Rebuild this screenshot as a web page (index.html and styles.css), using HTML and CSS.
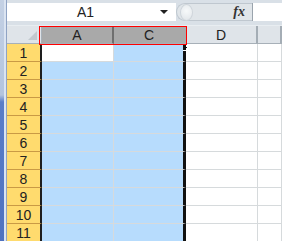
FILE: index.html
```html
<!DOCTYPE html>
<html lang="en">
<head>
  <meta charset="UTF-8">
  <title>Sheet selection</title>
  <link rel="stylesheet" href="styles.css">
</head>
<body>
<div class="app">
  <div class="strip"></div>

  <div class="main">
    <div class="fbar">
      <div class="namebox">
        <span class="ref">A1</span>
        <span class="caret"></span>
      </div>
      <div class="fxzone">
        <span class="knob"></span>
        <span class="fx">fx</span>
      </div>
      <div class="input"></div>
    </div>

    <div class="sheet">
      <div class="row head">
        <div class="corner"><span class="tri"></span></div>
        <div class="ch sel sep">A</div>
        <div class="ch sel">C</div>
        <div class="ch">D</div>
        <div class="ch rest"></div>
      </div>
      <div class="row"><div class="rh">1</div><div class="cell active"></div><div class="cell pick last"></div><div class="cell"></div><div class="cell rest"></div></div>
      <div class="row"><div class="rh">2</div><div class="cell pick"></div><div class="cell pick last"></div><div class="cell"></div><div class="cell rest"></div></div>
      <div class="row"><div class="rh">3</div><div class="cell pick"></div><div class="cell pick last"></div><div class="cell"></div><div class="cell rest"></div></div>
      <div class="row"><div class="rh">4</div><div class="cell pick"></div><div class="cell pick last"></div><div class="cell"></div><div class="cell rest"></div></div>
      <div class="row"><div class="rh">5</div><div class="cell pick"></div><div class="cell pick last"></div><div class="cell"></div><div class="cell rest"></div></div>
      <div class="row"><div class="rh">6</div><div class="cell pick"></div><div class="cell pick last"></div><div class="cell"></div><div class="cell rest"></div></div>
      <div class="row"><div class="rh">7</div><div class="cell pick"></div><div class="cell pick last"></div><div class="cell"></div><div class="cell rest"></div></div>
      <div class="row"><div class="rh">8</div><div class="cell pick"></div><div class="cell pick last"></div><div class="cell"></div><div class="cell rest"></div></div>
      <div class="row"><div class="rh">9</div><div class="cell pick"></div><div class="cell pick last"></div><div class="cell"></div><div class="cell rest"></div></div>
      <div class="row"><div class="rh">10</div><div class="cell pick"></div><div class="cell pick last"></div><div class="cell"></div><div class="cell rest"></div></div>
      <div class="row"><div class="rh">11</div><div class="cell pick"></div><div class="cell pick last"></div><div class="cell"></div><div class="cell rest"></div></div>

      <!-- red outline round the selected column headers -->
      <div class="head-mark"></div>
      <div class="handle"></div>
    </div>
  </div>
</div>
</body>
</html>
```

FILE: styles.css
```css
html, body {
  margin: 0;
  padding: 0;
}

body {
  width: 282px;
  height: 241px;
  overflow: hidden;
  background-color: #fff;
  font-family: "Liberation Sans", Arial, sans-serif;
  color: #222;
}

.app {
  display: flex;
  height: 241px;
}

.strip {
  width: 7px;
  flex: none;
  background: linear-gradient(to bottom, #c4d1e4 0, #b3c4de 95px, #5a7dc8 102px, #4f72c0 100%);
  border-right: 1px solid #8fa3c4;
  box-sizing: border-box;
  box-shadow: inset -2px 0 0 #dbe4f1;
}

.main {
  flex: 1;
  min-width: 0;
}

/* formula bar */

.fbar {
  display: flex;
  height: 26px;
  padding: 3px 0 4px;
  box-sizing: border-box;
  background-color: #d9e0e7;
  border-bottom: 1px solid #e8edf1;
}

.namebox {
  width: 169px;
  display: flex;
  align-items: center;
  background-color: #fff;
  box-sizing: border-box;
}

.ref {
  flex: 1;
  text-align: center;
  font-size: 14px;
  padding-left: 4px;
}

.caret {
  width: 0;
  height: 0;
  margin-right: 8px;
  border-left: 4px solid transparent;
  border-right: 4px solid transparent;
  border-top: 4px solid #222;
}

.fxzone {
  width: 76px;
  display: flex;
  align-items: center;
  justify-content: space-between;
  background-color: #e0e5e9;
  border: 1px solid #bfc7cf;
  border-right: none;
  border-radius: 9px 0 0 9px;
  box-sizing: border-box;
}

.knob {
  width: 11px;
  height: 15px;
  margin-left: 3px;
  border-radius: 50%;
  background: radial-gradient(circle at 50% 40%, #f7f9fa, #dfe4e8);
  border: 1px solid #cfd5db;
}

.fx {
  margin-right: 7px;
  font-family: "Liberation Serif", serif;
  font-style: italic;
  font-weight: bold;
  font-size: 14px;
  color: #333;
}

.input {
  flex: 1;
  background-color: #fff;
  border-left: 1px solid #9aa4ad;
}

/* grid */

.sheet {
  position: relative;
}

.row {
  display: flex;
  height: 18px;
}

.corner,
.rh {
  width: 35px;
  flex: none;
  box-sizing: border-box;
}

.corner {
  position: relative;
  background-color: #dfe4e9;
  border-bottom: 1px solid #a7b0b8;
  border-right: 1px solid #a7b0b8;
}

.tri {
  position: absolute;
  right: 4px;
  bottom: 3px;
  width: 0;
  height: 0;
  border-left: 9px solid transparent;
  border-bottom: 9px solid #c2c9cf;
}

.ch {
  width: 72px;
  flex: none;
  box-sizing: border-box;
  text-align: center;
  font-size: 14px;
  line-height: 19px;
  background-color: #dfe4e9;
  border-right: 2px solid #a4adb5;
  border-bottom: 1px solid #a7b0b8;
}

.ch.sel {
  background-color: #a9a9a9;
  border-right-color: #a9a9a9;
}

.ch.sep {
  border-right-color: #6f6f6f;
}

.ch.rest,
.cell.rest {
  flex: 1;
}

.rh {
  background-color: #ffdb6e;
  border-bottom: 1px solid #c99a45;
  border-right: 2px solid #1e1e1e;
  text-align: center;
  font-size: 14px;
  line-height: 18px;
}

.cell {
  width: 72px;
  flex: none;
  box-sizing: border-box;
  border-right: 1px solid #d6dadc;
  border-bottom: 1px solid #d6dadc;
}

.cell.active {
  background-color: #fff;
}

.cell.pick {
  background-color: #b7dcfd;
}

.cell.last {
  width: 72px;
  border-right: 3px solid #111;
}

.head-mark {
  position: absolute;
  left: 32px;
  top: 0;
  width: 148px;
  height: 19px;
  border: 1px solid #f00;
  box-sizing: border-box;
}

.handle {
  position: absolute;
  left: 176px;
  top: 21px;
  width: 4px;
  height: 2px;
  border-top: 1px solid #111;
  border-bottom: 1px solid #fff;
}
```
